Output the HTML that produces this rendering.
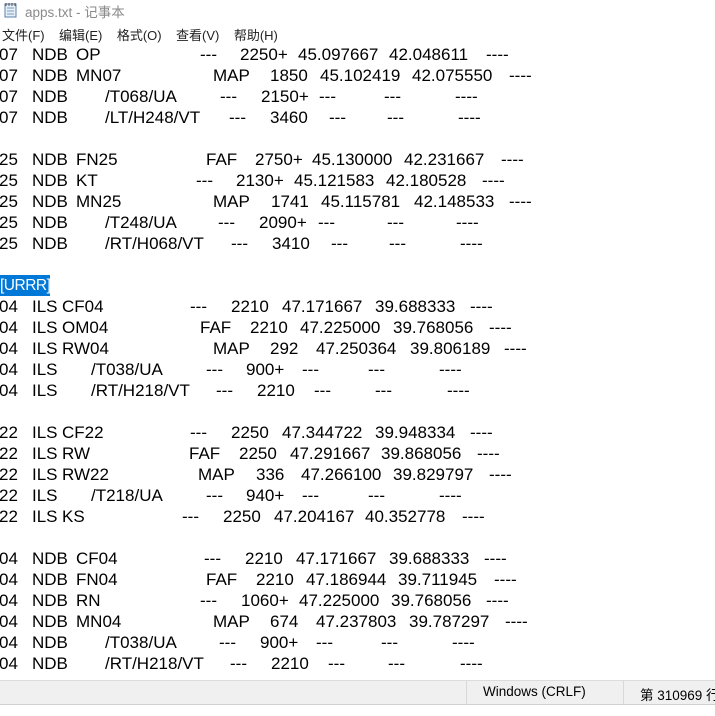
<!DOCTYPE html>
<html><head><meta charset="utf-8"><style>
body{margin:0;width:715px;height:716px;overflow:hidden;background:#fff;position:relative;font-family:"Liberation Sans","Noto Sans CJK SC",sans-serif}
.t{position:absolute;white-space:pre;font-size:17px;color:#000;line-height:21px}
#title{position:absolute;left:25px;top:1px;font-size:13.5px;color:#8a8a8a}
#menu{position:absolute;left:2px;top:25px;font-size:13px;color:#222;white-space:pre}
#status{position:absolute;left:0;top:680px;width:715px;height:23px;background:#f0f0f0;border-top:1px solid #dcdcdc;border-bottom:1px solid #d0d0d0;font-size:13.5px}
.sep{position:absolute;top:0;width:1px;height:23px;background:#d8d8d8}
</style></head><body>
<svg style="position:absolute;left:4px;top:2px" width="14" height="16"><rect x="1" y="2" width="11" height="13" fill="#e6f0f8" stroke="#5a7fa8"/><path d="M3 6h7M3 9h7M3 12h7" stroke="#7a9cc0"/><path d="M2 1v3M5 1v3M8 1v3M11 1v3" stroke="#555"/></svg>
<div id="title">apps.txt - 记事本</div>
<div id="menu">文件(F)    编辑(E)    格式(O)    查看(V)    帮助(H)</div>
<div id="c"></div>
<div id="status"><div class="sep" style="left:466px"></div><div class="sep" style="left:623px"></div>
<span style="position:absolute;left:483px;top:3px">Windows (CRLF)</span>
<span style="position:absolute;left:640px;top:3px;white-space:nowrap">第 310969 行</span></div>
<script>
const L=[
[55,"07","NDB",76,"OP",[200,"---",240,"2250+",298,"45.097667",389,"42.048611",486,"----"]],
[76,"07","NDB",76,"MN07",[213,"MAP",270,"1850",320,"45.102419",412,"42.075550",509,"----"]],
[97,"07","NDB",105,"/T068/UA",[220,"---",261,"2150+",319,"---",384,"---",455,"----"]],
[118,"07","NDB",105,"/LT/H248/VT",[229,"---",270,"3460",329,"---",387,"---",458,"----"]],
[160,"25","NDB",76,"FN25",[206,"FAF",255,"2750+",312,"45.130000",404,"42.231667",501,"----"]],
[181,"25","NDB",76,"KT",[196,"---",236,"2130+",294,"45.121583",386,"42.180528",482,"----"]],
[202,"25","NDB",76,"MN25",[213,"MAP",271,"1741",321,"45.115781",414,"42.148533",509,"----"]],
[223,"25","NDB",105,"/T248/UA",[218,"---",259,"2090+",318,"---",387,"---",456,"----"]],
[244,"25","NDB",105,"/RT/H068/VT",[231,"---",272,"3410",331,"---",389,"---",460,"----"]],
[307,"04","ILS",62,"CF04",[190,"---",231,"2210",282,"47.171667",375,"39.688333",470,"----"]],
[328,"04","ILS",62,"OM04",[200,"FAF",250,"2210",300,"47.225000",393,"39.768056",489,"----"]],
[349,"04","ILS",62,"RW04",[213,"MAP",270,"292",316,"47.250364",410,"39.806189",504,"----"]],
[370,"04","ILS",91,"/T038/UA",[206,"---",246,"900+",302,"---",368,"---",439,"----"]],
[391,"04","ILS",91,"/RT/H218/VT",[216,"---",257,"2210",314,"---",375,"---",447,"----"]],
[433,"22","ILS",62,"CF22",[190,"---",231,"2250",282,"47.344722",375,"39.948334",470,"----"]],
[454,"22","ILS",62,"RW",[189,"FAF",239,"2250",290,"47.291667",381,"39.868056",477,"----"]],
[475,"22","ILS",62,"RW22",[198,"MAP",256,"336",301,"47.266100",393,"39.829797",489,"----"]],
[496,"22","ILS",91,"/T218/UA",[206,"---",246,"940+",302,"---",368,"---",439,"----"]],
[517,"22","ILS",62,"KS",[182,"---",223,"2250",274,"47.204167",365,"40.352778",462,"----"]],
[559,"04","NDB",76,"CF04",[204,"---",245,"2210",296,"47.171667",389,"39.688333",484,"----"]],
[580,"04","NDB",76,"FN04",[206,"FAF",256,"2210",306,"47.186944",398,"39.711945",494,"----"]],
[601,"04","NDB",76,"RN",[200,"---",241,"1060+",299,"47.225000",391,"39.768056",486,"----"]],
[622,"04","NDB",76,"MN04",[213,"MAP",270,"674",316,"47.237803",409,"39.787297",505,"----"]],
[643,"04","NDB",105,"/T038/UA",[219,"---",260,"900+",316,"---",381,"---",452,"----"]],
[664,"04","NDB",105,"/RT/H218/VT",[230,"---",271,"2210",328,"---",388,"---",460,"----"]]];
let h="";
const s=(x,y,t)=>h+=`<span class="t" style="left:${x}px;top:${y-11}px">${t}</span>`;
for(const l of L){const y=l[0];s(-1,y,l[1]);s(32,y,l[2]);s(l[3],y,l[4]);const r=l[5];for(let i=0;i<r.length;i+=2)s(r[i],y,r[i+1]);}
h+=`<span class="t" style="left:0;top:275px;background:#0078d7;color:#fff;font-size:15.5px;letter-spacing:-0.5px">[URRR]</span>`;
document.getElementById("c").innerHTML=h;
</script>
</body></html>
